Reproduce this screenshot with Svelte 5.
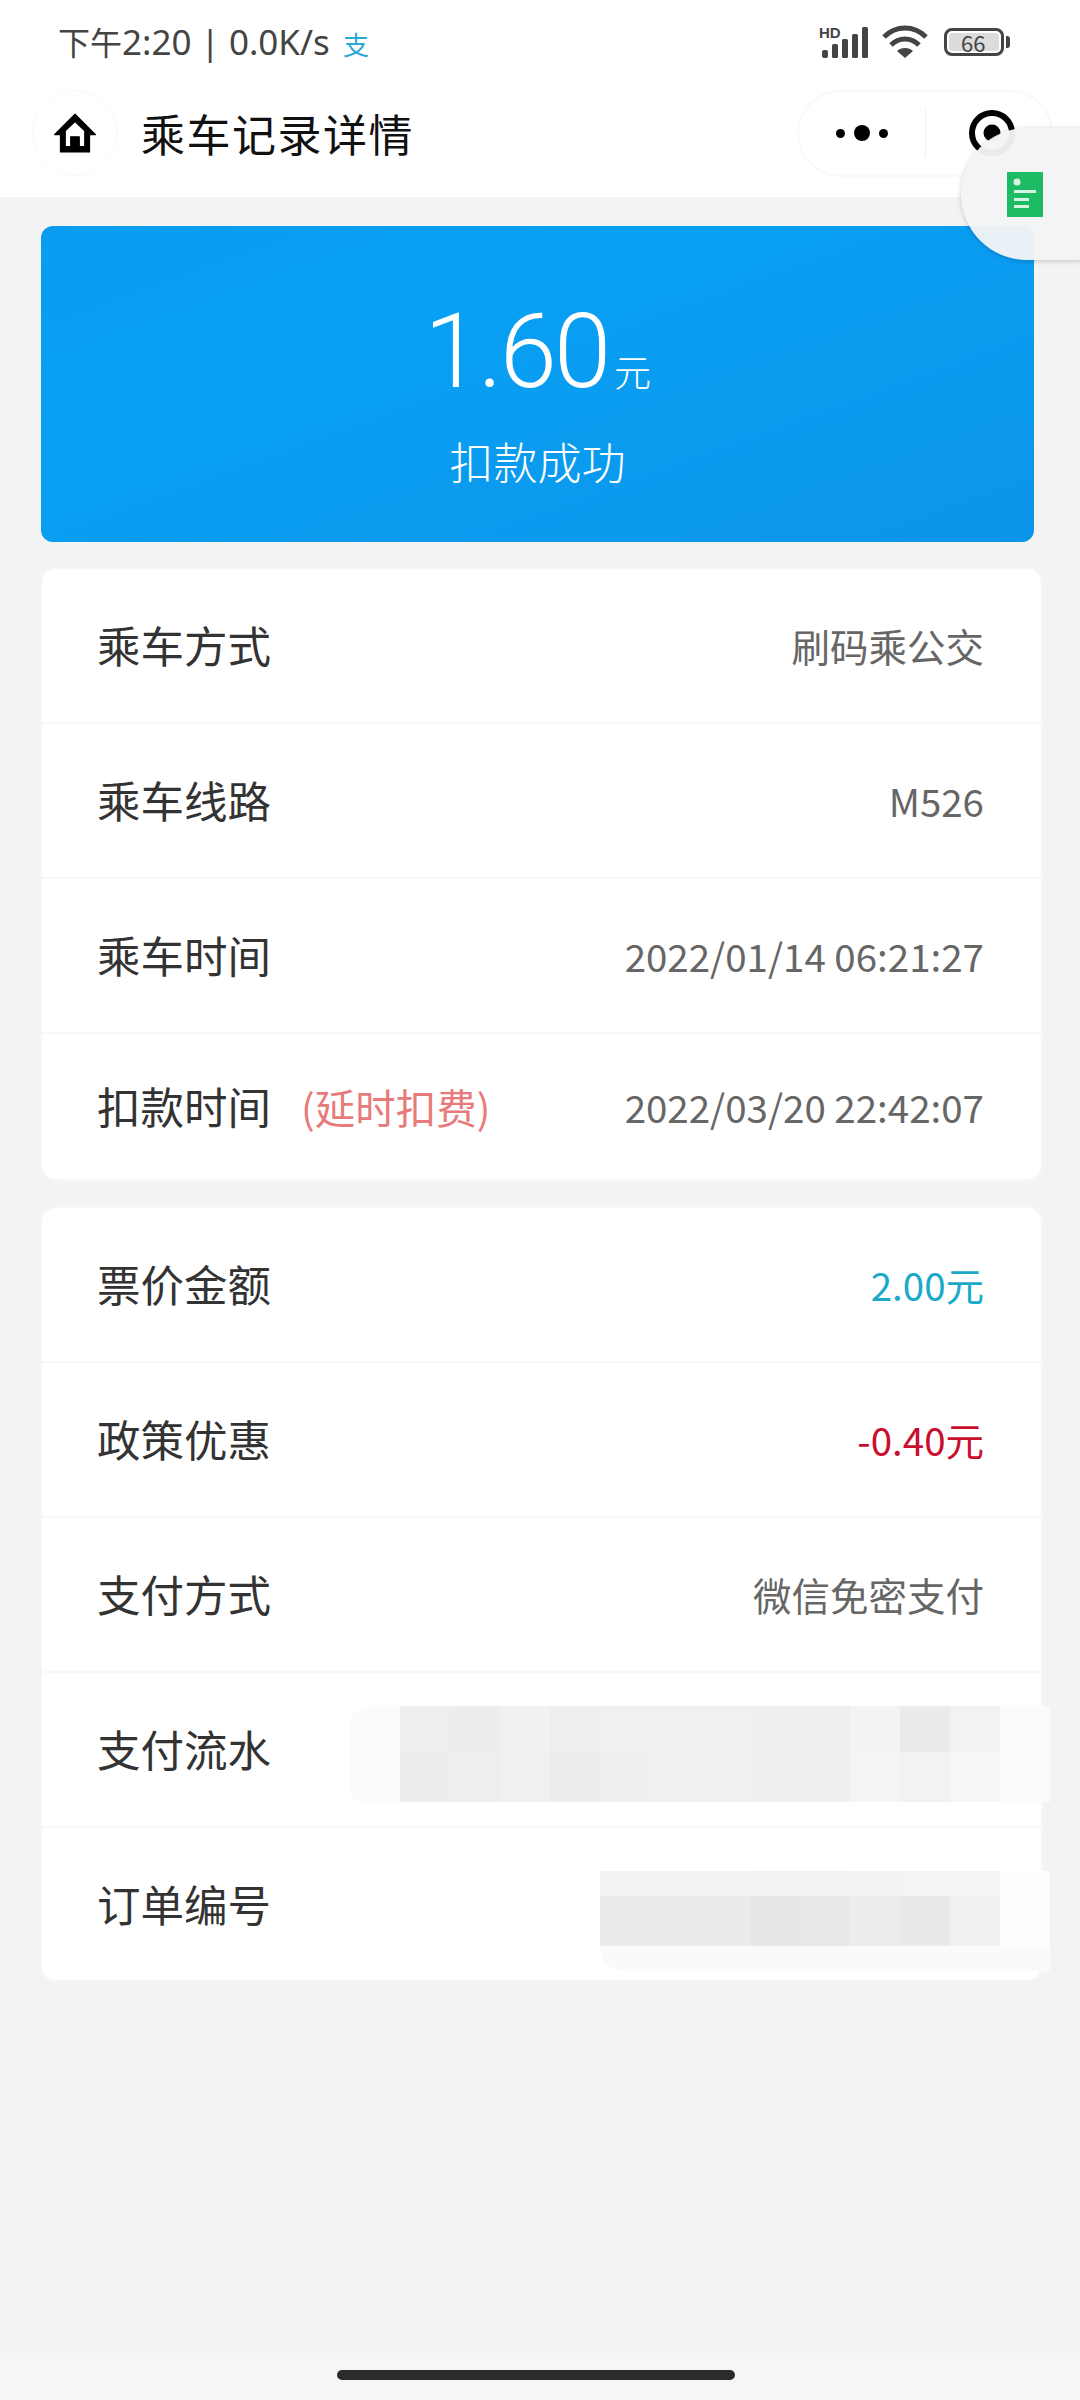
<script>
  const firstCard = [
    { label: '乘车方式', value: '刷码乘公交' },
    { label: '乘车线路', value: 'M526' },
    { label: '乘车时间', value: '2022/01/14 06:21:27' },
    { label: '扣款时间', note: '(延时扣费)', value: '2022/03/20 22:42:07' }
  ];
  const secondCard = [
    { label: '票价金额', value: '2.00元', tone: 'cyan' },
    { label: '政策优惠', value: '-0.40元', tone: 'red' },
    { label: '支付方式', value: '微信免密支付' },
    { label: '支付流水', blur: 'long' },
    { label: '订单编号', blur: 'short' }
  ];
  const longCells = ['#eee', '#ededed', '#f1f1f1', '#eee', '#f0f0f0', '#f0f0f0', '#f0f0f0', '#efefef', '#efefef', '#f3f3f3', '#ebebeb', '#f2f2f2',
    '#ececec', '#eee', '#f0f0f0', '#ededed', '#efefef', '#f0f0f0', '#f0f0f0', '#efefef', '#efefef', '#f5f5f5', '#f2f2f2', '#f6f6f6'];
  const shortCells = ['#f3f3f3', '#f3f3f3', '#f3f3f3', '#f2f2f2', '#f2f2f2', '#f3f3f3', '#f4f4f4', '#f5f5f5',
    '#ebebeb', '#ebebeb', '#eaeaea', '#e7e7e7', '#e8e8e8', '#ededed', '#e9e9e9', '#f1f1f1'];
</script>

{#snippet row(item)}
  <div class="row">
    <div class="label">{item.label}{#if item.note}<span class="note">{item.note}</span>{/if}</div>
    {#if item.value}<div class="value {item.tone || ''}">{item.value}</div>{/if}
    {#if item.blur === 'long'}
      <div class="smear smear-long">
        <div class="mosaic mosaic-long">
          {#each longCells as c}<i style="background:{c}"></i>{/each}
        </div>
      </div>
    {/if}
    {#if item.blur === 'short'}
      <div class="smear smear-short">
        <div class="mosaic mosaic-short">
          {#each shortCells as c}<i style="background:{c}"></i>{/each}
        </div>
      </div>
    {/if}
  </div>
{/snippet}

<div class="page">
  <header class="head">
    <div class="status">
      <div class="status-left"><span class="cjk">下午</span>2:20 | 0.0K/s <span class="pay">支</span></div>
      <div class="status-right">
        <svg class="signal" viewBox="0 0 50 32" width="50" height="32">
          <text x="0" y="12" class="hd">HD</text>
          <rect x="3" y="24" width="6" height="8" rx="2" fill="#444"/>
          <rect x="13" y="18" width="6" height="14" rx="1.500" fill="#444"/>
          <rect x="23" y="13" width="6" height="19" rx="1.500" fill="#444"/>
          <rect x="33" y="8" width="6" height="24" rx="1.500" fill="#444"/>
          <rect x="43" y="1" width="6" height="31" rx="1.500" fill="#444"/>
        </svg>
        <svg class="wifi" viewBox="0 0 46 34" width="46" height="34" fill="none" stroke="#444" stroke-width="5">
          <path d="M2 12C14 0 32 0 44 12"/>
          <path d="M9 20C17 12 29 12 37 20"/>
          <path d="M23 33l-8-7c4-4 12-4 16 0z" fill="#444" stroke="none"/>
        </svg>
        <div class="battery"><div class="level">66</div></div>
        <div class="nub"></div>
      </div>
    </div>
    <nav class="nav">
      <div class="home">
        <svg viewBox="2 2 40 37" width="44" height="40">
          <path d="M22 3L3 22h5.500v16h27V22H41zM22 10L31 18.500V33h-5v-9h-8v9h-5V18.500z" fill="#000" fill-rule="evenodd" stroke="#000" stroke-width="1" stroke-linejoin="round"/>
        </svg>
      </div>
      <div class="title">乘车记录详情</div>
      <div class="capsule">
        <div class="dots"><i class="small"></i><i class="big"></i><i class="small"></i></div>
        <div class="divider"></div>
        <svg class="target" viewBox="0 0 52 52" width="52" height="52">
          <circle cx="26" cy="26" r="20" fill="none" stroke="#000" stroke-width="6"/>
          <circle cx="26" cy="26" r="8.500" fill="#000"/>
        </svg>
      </div>
    </nav>
  </header>

  <div class="float">
    <svg viewBox="0 0 36 45" width="36" height="45">
      <rect width="36" height="45" fill="#1dbb63"/>
      <circle cx="10" cy="10" r="3.500" fill="#d8f5e4"/>
      <rect x="7" y="18" width="22" height="3" fill="#d8f5e4"/>
      <rect x="7" y="26" width="15" height="3" fill="#d8f5e4"/>
      <rect x="7" y="33" width="15" height="3" fill="#d8f5e4"/>
    </svg>
  </div>

  <main class="content">
    <section class="hero">
      <div class="amount"><span class="num">1.60</span><span class="unit">元</span></div>
      <div class="result">扣款成功</div>
    </section>

    <section class="card first">
      {#each firstCard as item}{@render row(item)}{/each}
    </section>

    <section class="card second">
      {#each secondCard as item}{@render row(item)}{/each}
    </section>
  </main>

  <div class="strip"></div>
  <div class="indicator"></div>
</div>

<style>
  :global(body) {
    background: #f3f3f3;
  }
  .page {
    position: relative;
    height: 2400px;
    overflow: hidden;
    display: flex;
    flex-direction: column;
    background: #f3f3f3;
    font-family: "Noto Sans CJK SC", "Noto Sans", sans-serif;
  }

  .head {
    background: #fff;
    height: 197px;
  }
  .status {
    height: 83px;
    padding: 0 70px 0 58px;
    display: flex;
    align-items: center;
    justify-content: space-between;
  }
  .status-left {
    font-family: "Noto Sans", "Noto Sans CJK SC", sans-serif;
    font-size: 35px;
    color: #444;
    white-space: nowrap;
  }
  .cjk {
    font-size: 32px;
  }
  .pay {
    font-size: 26px;
    color: #2ba9d6;
    margin-left: 4px;
  }
  .status-right {
    display: flex;
    align-items: center;
  }
  .hd {
    font-family: "Liberation Sans", sans-serif;
    font-weight: bold;
    font-size: 15px;
    fill: #444;
  }
  .wifi {
    margin-left: 13px;
  }
  .battery {
    margin-left: 16px;
    width: 60px;
    height: 28px;
    box-sizing: border-box;
    border: 3px solid #444;
    border-radius: 8px;
    padding: 2px;
    display: flex;
  }
  .level {
    width: 40px;
    background: #dcdcdc;
    border-radius: 3px;
    color: #444;
    font-size: 22px;
    line-height: 18px;
    padding-left: 12px;
    white-space: nowrap;
  }
  .nub {
    width: 4px;
    height: 12px;
    margin-left: 2px;
    background: #444;
    border-radius: 0 3px 3px 0;
  }

  .nav {
    height: 114px;
    display: flex;
    align-items: center;
    padding-left: 32px;
    padding-bottom: 14px;
    box-sizing: border-box;
  }
  .home {
    width: 86px;
    height: 86px;
    border: 1px solid #f9f9f9;
    border-radius: 50%;
    box-sizing: border-box;
    display: flex;
    align-items: center;
    justify-content: center;
  }
  .title {
    margin-left: 23px;
    font-size: 44px;
    color: #111;
    letter-spacing: 1.500px;
  }
  .capsule {
    margin-left: auto;
    margin-right: 27px;
    width: 256px;
    height: 87px;
    box-sizing: border-box;
    border: 2px solid #f9f9f9;
    border-radius: 44px;
    display: flex;
    align-items: center;
    position: relative;
  }
  .dots {
    width: 126px;
    display: flex;
    align-items: center;
    justify-content: center;
    gap: 9px;
  }
  .dots i {
    background: #000;
    border-radius: 50%;
  }
  .dots .small {
    width: 9px;
    height: 9px;
  }
  .dots .big {
    width: 16px;
    height: 16px;
  }
  .divider {
    width: 1px;
    height: 48px;
    background: #eee;
  }
  .target {
    margin-left: 40px;
  }

  .float {
    position: absolute;
    top: 128px;
    left: 961px;
    width: 180px;
    height: 132px;
    border-radius: 66px;
    background: rgba(243, 244, 246, 0.96);
    box-shadow: 0 1px 5px rgba(0, 0, 0, 0.2);
    z-index: 2;
    box-sizing: border-box;
    padding: 44px 0 0 46px;
  }
  .float svg {
    display: block;
  }

  .content {
    padding-top: 29px;
    display: flex;
    flex-direction: column;
  }
  .hero {
    margin-left: 41px;
    width: 993px;
    height: 316px;
    border-radius: 12px;
    background: linear-gradient(160deg, #0a9cf0 0%, #07a0f3 35%, #0a9bef 60%, #0b95ea 100%);
    color: #fff;
    display: flex;
    flex-direction: column;
    align-items: center;
  }
  .amount {
    margin-top: 70px;
    height: 112px;
    display: flex;
    align-items: baseline;
    line-height: 112px;
  }
  .num {
    font-family: Roboto, sans-serif;
    font-weight: 300;
    font-size: 103px;
    letter-spacing: -3px;
  }
  .unit {
    font-size: 37px;
    font-weight: 300;
    margin-left: 6px;
  }
  .result {
    margin-top: 23px;
    font-size: 44px;
    font-weight: 300;
    line-height: 60px;
  }

  .card {
    margin-left: 42px;
    width: 999px;
    background: #fff;
    border-radius: 14px;
    box-shadow: 0 0 6px rgba(255, 255, 255, 0.7);
  }
  .first {
    margin-top: 27px;
  }
  .second {
    margin-top: 29px;
  }
  .row {
    position: relative;
    height: 155px;
    box-sizing: border-box;
    padding: 0 57px 2px 55px;
    display: flex;
    align-items: center;
    justify-content: space-between;
    border-bottom: 2px solid #f8f8f8;
  }
  .first .row:last-child {
    height: 145px;
    border-bottom: none;
  }
  .second .row:last-child {
    height: 152px;
    border-bottom: none;
  }
  .label {
    font-size: 43.500px;
    color: #333;
    white-space: nowrap;
  }
  .note {
    font-size: 40.500px;
    color: #e77b7b;
    margin-left: 30px;
  }
  .value {
    font-size: 38.500px;
    color: #666;
    white-space: nowrap;
  }
  .cyan {
    color: #1aa9c9;
  }
  .red {
    color: #c8102e;
  }

  .smear {
    position: absolute;
    background: #fbfbfb;
  }
  .smear-long {
    left: 308px;
    top: 33px;
    width: 700px;
    height: 96px;
    padding-left: 50px;
    box-sizing: border-box;
    border-radius: 20px 0 0 12px;
  }
  .smear-short {
    left: 558px;
    top: 43px;
    width: 450px;
    height: 100px;
    border-radius: 20px 0 0 24px;
    padding-right: 50px;
    box-sizing: border-box;
    background: linear-gradient(#fdfdfd 0 76px, #fafafa 76px);
  }
  .mosaic {
    display: grid;
  }
  .mosaic-long {
    width: 600px;
    grid-template-columns: repeat(12, 50px);
    grid-template-rows: 46px 50px;
  }
  .mosaic-short {
    width: 400px;
    grid-template-columns: repeat(8, 50px);
    grid-template-rows: 25px 50px;
  }

  .strip {
    position: absolute;
    left: 0;
    right: 0;
    bottom: 0;
    height: 47px;
    background: #f6f6f6;
  }
  .indicator {
    position: absolute;
    left: 337px;
    bottom: 20px;
    width: 398px;
    height: 10px;
    border-radius: 5px;
    background: #2b2b2b;
  }
</style>
